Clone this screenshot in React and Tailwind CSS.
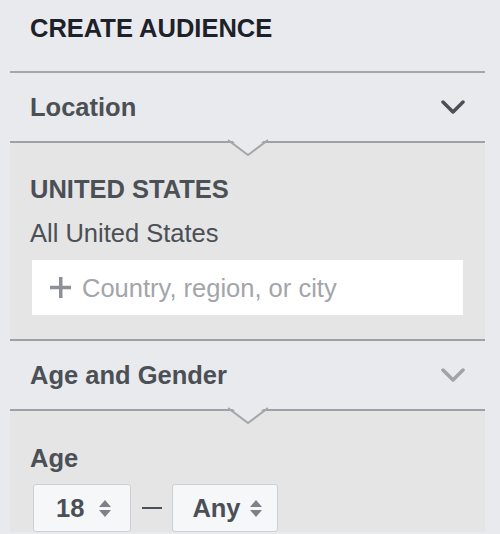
import React from 'react';

const Chevron = ({ color }) => (
  <svg width="24" height="15" viewBox="0 0 24 15" fill="none">
    <polyline points="2,2 12,12 22,2" stroke={color} strokeWidth="3.5" strokeLinecap="round" strokeLinejoin="round" />
  </svg>
);

// little downward notch that sits on the section divider
const Notch = () => (
  <svg className="absolute left-[218px] top-[calc(100%-3px)]" width="40" height="20" viewBox="0 0 40 20">
    <polygon points="1,0 39,0 20,16" fill="#e9eaed" />
    <polyline points="0,2 20,17 40,2" fill="none" stroke="#a3a6ab" strokeWidth="2" />
  </svg>
);

const Stepper = () => (
  <svg width="12" height="17" viewBox="0 0 12 17">
    <polygon points="6,0 12,7 0,7" fill="#7d8188" />
    <polygon points="0,10 12,10 6,17" fill="#7d8188" />
  </svg>
);

const SectionHeader = ({ label, chevronColor }) => (
  <div className="relative z-10 flex h-[70px] items-center justify-between border-b-2 border-[#9ea1a6] pl-[20px] pr-[20px]">
    <span className="text-[25.5px] font-bold leading-[30px] text-[#4b4f56]">{label}</span>
    <Chevron color={chevronColor} />
    <Notch />
  </div>
);

export default function App() {
  return (
    <div className="h-[534px] w-[500px] overflow-hidden bg-[#e9eaed] font-['Liberation_Sans',Arial,sans-serif]">
      <div className="ml-[10px] w-[475px]">
        {/* Title */}
        <div className="border-b-2 border-[#a3a6ab] pb-[28px] pl-[20px] pt-[13px]">
          <h1 className="text-[25.5px] font-bold leading-[30px] text-[#1d2129]">CREATE AUDIENCE</h1>
        </div>

        {/* Location */}
        <SectionHeader label="Location" chevronColor="#4b4f56" />
        <div className="border-b-2 border-[#9ea1a6] bg-[#e5e5e5] px-[20px] pb-[24px] pt-[31px]">
          <div className="text-[25.5px] font-bold leading-[30px] text-[#4b4f56]">UNITED STATES</div>
          <div className="mt-[14px] text-[25.5px] leading-[30px] text-[#4b4f56]">All United States</div>
          <div className="mx-[2px] mt-[12px] flex h-[55px] items-center gap-[11px] bg-white pl-[18px]">
            <svg width="21" height="21" viewBox="0 0 21 21">
              <rect x="9" y="0" width="3.5" height="21" fill="#8d9197" />
              <rect x="0" y="8.75" width="21" height="3.5" fill="#8d9197" />
            </svg>
            <span className="text-[25.5px] leading-[30px] text-[#a2a5aa]">Country, region, or city</span>
          </div>
        </div>

        {/* Age and Gender */}
        <SectionHeader label="Age and Gender" chevronColor="#a0a3a9" />
        <div className="bg-[#e5e5e5] px-[20px] pt-[32px]">
          <div className="text-[25.5px] font-bold leading-[30px] text-[#4b4f56]">Age</div>
          <div className="ml-[3px] mt-[11px] flex items-center">
            <div className="flex h-[48px] items-center gap-[15px] rounded-[3px] border border-[#ccd0d5] bg-[#f6f7f9] pl-[22px] pr-[19px]">
              <span className="text-[25.5px] font-bold leading-[30px] text-[#4b4f56]">18</span>
              <Stepper />
            </div>
            <div className="ml-[11px] mr-[10px] h-[2px] w-[20px] bg-[#4b4f56]" />
            <div className="flex h-[48px] items-center gap-[9px] rounded-[3px] border border-[#ccd0d5] bg-[#f6f7f9] pl-[19px] pr-[15px]">
              <span className="text-[25.5px] font-bold leading-[30px] text-[#4b4f56]">Any</span>
              <Stepper />
            </div>
          </div>
        </div>
      </div>
    </div>
  );
}
